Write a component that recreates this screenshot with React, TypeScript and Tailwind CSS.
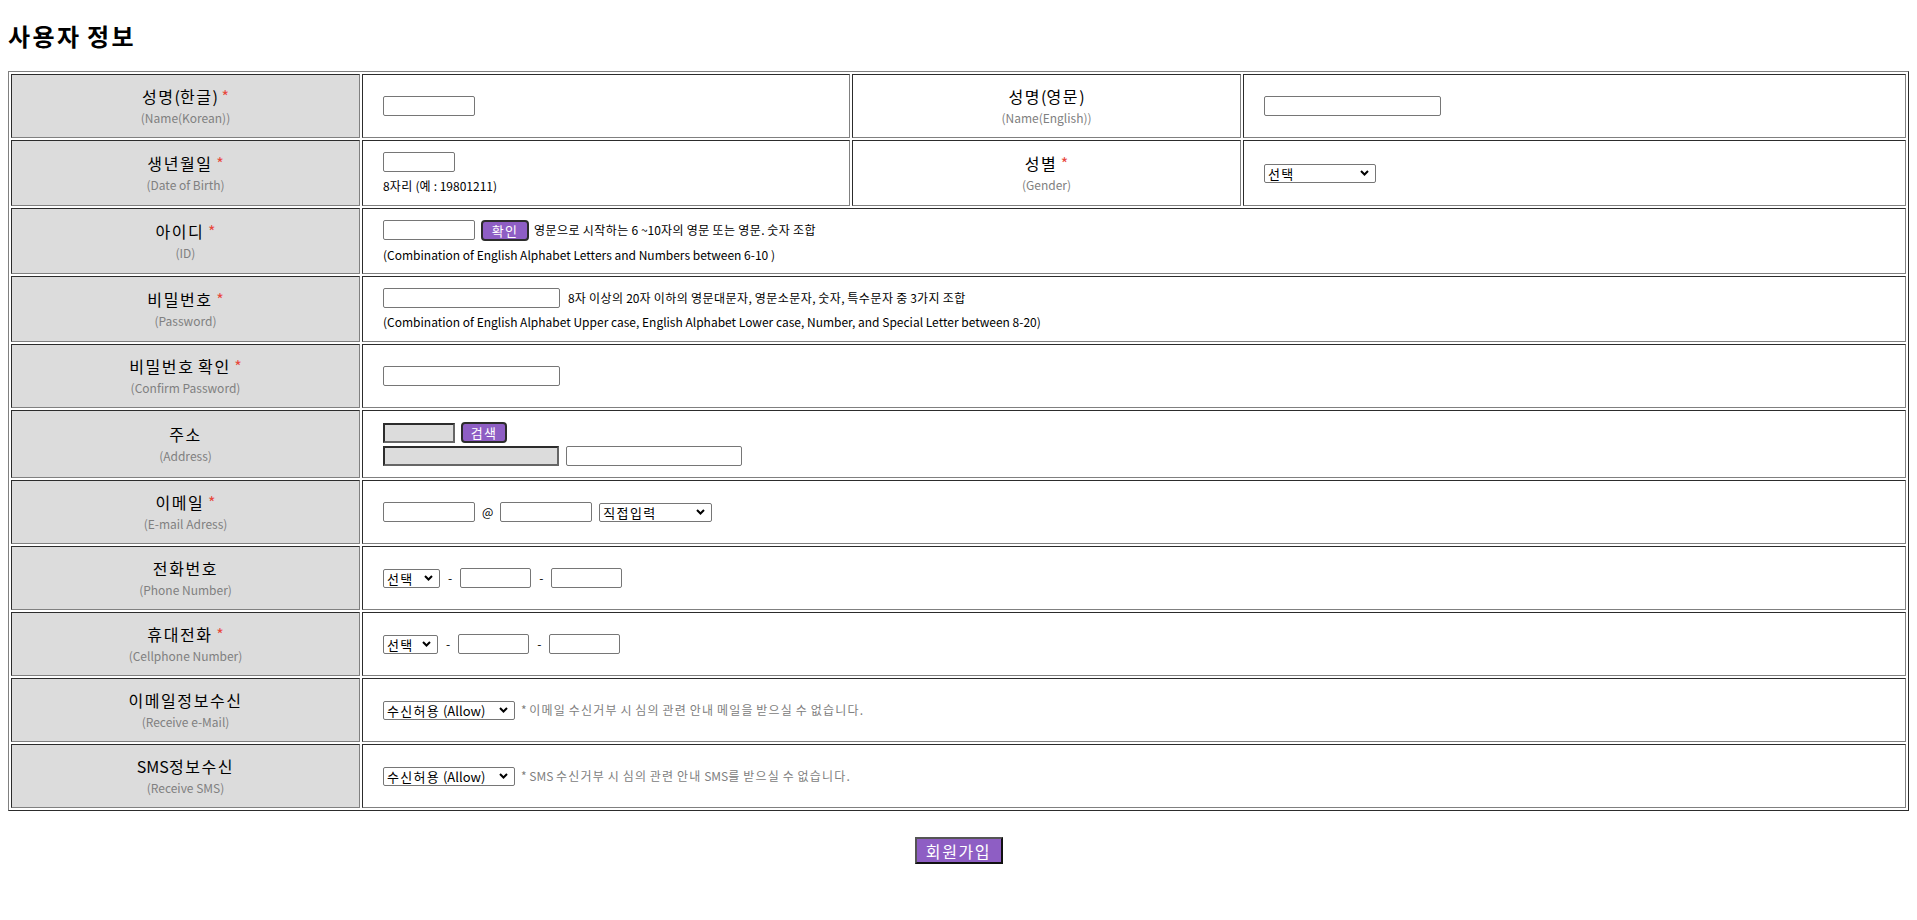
const cellBorder =
	"border border-t-[#2c2c2c] border-l-[#2c2c2c] border-b-[#808080] border-r-[#808080]";

function K({ t, tight }: { t: string; tight?: boolean }) {
	const parts = t.split(/([\uAC00-\uD7A3]+)/);
	const cls = tight ? "tracking-[0.04em]" : "tracking-[0.1em]";
	return (
		<>
			{parts.map((p, i) =>
				/[\uAC00-\uD7A3]/.test(p) ? (
					<span key={i} className={cls}>
						{p}
					</span>
				) : (
					p
				)
			)}
		</>
	);
}

function Label({
	ko,
	en,
	req,
	h = "h-[64px]",
	white,
}: {
	ko: string;
	en: string;
	req?: boolean;
	h?: string;
	white?: boolean;
}) {
	return (
		<td
			className={`${h} ${white ? "bg-white" : "bg-[#dcdcdc]"} text-center align-middle p-0 ${cellBorder}`}
		>
			<div className="text-[16px] leading-[24px] text-black">
				<K t={ko} />
				{req && <span className="text-[#e8483c]"> *</span>}
			</div>
			<div className="text-[12px] leading-[20px] text-[#808080]">{en}</div>
		</td>
	);
}

function Field({ children, span }: { children: React.ReactNode; span?: number }) {
	return (
		<td
			colSpan={span}
			className={`align-middle pl-[20px] pr-2 py-0 text-[12px] text-black ${cellBorder}`}
		>
			{children}
		</td>
	);
}

function TextInput({ w, gray }: { w: string; gray?: boolean }) {
	if (gray) {
		return (
			<input
				readOnly
				className={`${w} h-[20px] bg-[#dcdcdc] border-2 border-t-[#2c2c2c] border-l-[#2c2c2c] border-b-[#666] border-r-[#666]`}
			/>
		);
	}
	return (
		<input className={`${w} h-[20px] bg-white border border-[#767676] rounded-[2px]`} />
	);
}

function Chevron() {
	return (
		<svg width="9" height="6" viewBox="0 0 9 6" className="shrink-0">
			<path d="M1 1 L4.5 4.5 L8 1" fill="none" stroke="#000" strokeWidth="2" />
		</svg>
	);
}

function Select({ label, w }: { label: string; w: string }) {
	return (
		<div
			className={`${w} h-[19px] inline-flex items-center justify-between border border-[#767676] rounded-[2px] bg-white pl-[3px] pr-[6px] text-[13px] leading-none text-black`}
		>
			<span>
				<K t={label} />
			</span>
			<Chevron />
		</div>
	);
}

function PurpleButton({ label, w }: { label: string; w: string }) {
	return (
		<button
			className={`${w} h-[21px] flex items-center justify-center rounded-[4px] border-2 border-[#2c2c2c] bg-[#8e5ec4] text-white text-[13px] leading-none`}
		>
			<K t={label} />
		</button>
	);
}

export default function App() {
	return (
		<div className="min-h-screen bg-white px-2 font-['Noto_Sans_CJK_KR',sans-serif] text-black">
			<h2 className="mt-[20px] mb-[20px] text-[24px] leading-[31px] font-bold">
				<K t="사용자 정보" />
			</h2>

			<table className="w-full table-fixed border-separate border-spacing-[2px] border border-t-[#808080] border-l-[#808080] border-b-[#2c2c2c] border-r-[#2c2c2c]">
				<colgroup>
					<col className="w-[349px]" />
					<col className="w-[488px]" />
					<col className="w-[389px]" />
					<col />
				</colgroup>
				<tbody>
					<tr>
						<Label ko="성명(한글)" en="(Name(Korean))" req />
						<Field>
							<TextInput w="w-[92px]" />
						</Field>
						<Label ko="성명(영문)" en="(Name(English))" white />
						<Field>
							<TextInput w="w-[177px]" />
						</Field>
					</tr>
					<tr>
						<Label ko="생년월일" en="(Date of Birth)" req h="h-[66px]" />
						<Field>
							<TextInput w="w-[72px]" />
							<div className="mt-[6px] leading-[16px]">
								<K t="8자리 (예 : 19801211)" tight />
							</div>
						</Field>
						<Label ko="성별" en="(Gender)" req h="h-[66px]" white />
						<Field>
							<Select label="선택" w="w-[112px]" />
						</Field>
					</tr>
					<tr>
						<Label ko="아이디" en="(ID)" req h="h-[66px]" />
						<Field span={3}>
							<div className="mt-[1px] flex items-center">
								<TextInput w="w-[92px]" />
								<span className="ml-[6px]">
									<PurpleButton label="확인" w="w-[48px]" />
								</span>
								<span className="ml-[5px]">
									<K t="영문으로 시작하는 6 ~10자의 영문 또는 영문. 숫자 조합" tight />
								</span>
							</div>
							<div className="mt-[5px] leading-[18px]">
								(Combination of English Alphabet Letters and Numbers between 6-10 )
							</div>
						</Field>
					</tr>
					<tr>
						<Label ko="비밀번호" en="(Password)" req h="h-[66px]" />
						<Field span={3}>
							<div className="mt-[1px] flex items-center">
								<TextInput w="w-[177px]" />
								<span className="ml-[8px]">
									<K
										t="8자 이상의 20자 이하의 영문대문자, 영문소문자, 숫자, 특수문자 중 3가지 조합"
										tight
									/>
								</span>
							</div>
							<div className="mt-[5px] leading-[18px]">
								(Combination of English Alphabet Upper case, English Alphabet Lower case, Number, and
								Special Letter between 8-20)
							</div>
						</Field>
					</tr>
					<tr>
						<Label ko="비밀번호 확인" en="(Confirm Password)" req />
						<Field span={3}>
							<TextInput w="w-[177px]" />
						</Field>
					</tr>
					<tr>
						<Label ko="주소" en="(Address)" h="h-[68px]" />
						<Field span={3}>
							<div className="flex items-center">
								<TextInput w="w-[72px]" gray />
								<span className="ml-[6px]">
									<PurpleButton label="검색" w="w-[46px]" />
								</span>
							</div>
							<div className="mt-[3px] flex items-center">
								<TextInput w="w-[176px]" gray />
								<span className="ml-[7px]">
									<TextInput w="w-[176px]" />
								</span>
							</div>
						</Field>
					</tr>
					<tr>
						<Label ko="이메일" en="(E-mail Adress)" req />
						<Field span={3}>
							<div className="flex items-center">
								<TextInput w="w-[92px]" />
								<span className="mx-[7px]">@</span>
								<TextInput w="w-[92px]" />
								<span className="ml-[7px]">
									<Select label="직접입력" w="w-[113px]" />
								</span>
							</div>
						</Field>
					</tr>
					<tr>
						<Label ko="전화번호" en="(Phone Number)" />
						<Field span={3}>
							<div className="flex items-center">
								<Select label="선택" w="w-[57px]" />
								<span className="mx-[8px]">-</span>
								<TextInput w="w-[71px]" />
								<span className="mx-[8px]">-</span>
								<TextInput w="w-[71px]" />
							</div>
						</Field>
					</tr>
					<tr>
						<Label ko="휴대전화" en="(Cellphone Number)" req />
						<Field span={3}>
							<div className="flex items-center">
								<Select label="선택" w="w-[55px]" />
								<span className="mx-[8px]">-</span>
								<TextInput w="w-[71px]" />
								<span className="mx-[8px]">-</span>
								<TextInput w="w-[71px]" />
							</div>
						</Field>
					</tr>
					<tr>
						<Label ko="이메일정보수신" en="(Receive e-Mail)" />
						<Field span={3}>
							<div className="flex items-center">
								<Select label="수신허용 (Allow)" w="w-[132px]" />
								<span className="ml-[6px] text-[#808080]">
									<K t="* 이메일 수신거부 시 심의 관련 안내 메일을 받으실 수 없습니다." />
								</span>
							</div>
						</Field>
					</tr>
					<tr>
						<Label ko="SMS정보수신" en="(Receive SMS)" />
						<Field span={3}>
							<div className="flex items-center">
								<Select label="수신허용 (Allow)" w="w-[132px]" />
								<span className="ml-[6px] text-[#808080]">
									<K t="* SMS 수신거부 시 심의 관련 안내 SMS를 받으실 수 없습니다." />
								</span>
							</div>
						</Field>
					</tr>
				</tbody>
			</table>

			<div className="mt-[26px] flex justify-center">
				<button className="h-[27px] w-[88px] flex items-center justify-center border-2 border-t-[#555] border-l-[#555] border-b-[#111] border-r-[#111] bg-[#8e5ec4] text-white text-[16px] leading-none">
					<K t="회원가입" />
				</button>
			</div>
		</div>
	);
}
